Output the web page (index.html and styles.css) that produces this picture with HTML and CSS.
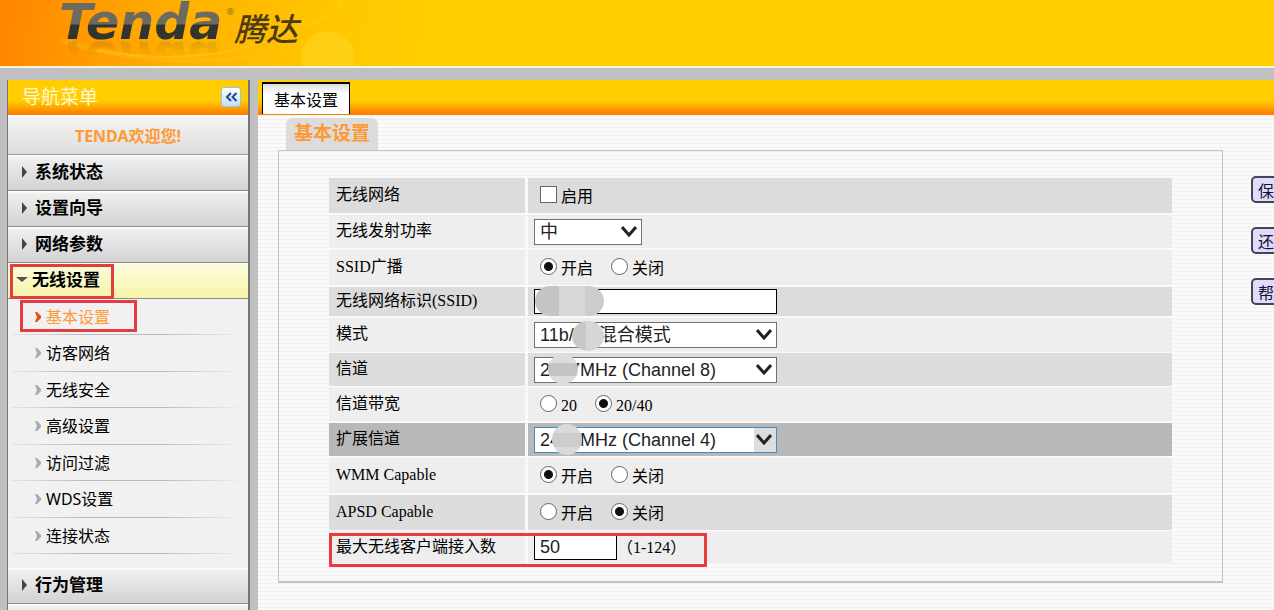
FILE: index.html
```html
<!DOCTYPE html>
<html lang="zh-CN">
<head>
<meta charset="utf-8">
<title>Tenda 腾达 - 无线设置</title>
<link rel="stylesheet" href="styles.css">
</head>
<body>
<header class="banner">
  <svg class="banner-art" viewBox="0 0 430 66" aria-hidden="true">
    <circle cx="328" cy="58" r="27" fill="#ffd21a" opacity=".7"/>
    <path d="M95 50Q190 68 270 40T340 0" fill="none" stroke="#ffcf30" stroke-width="2" opacity=".4"/>
    <path d="M60 40Q170 75 300 50" fill="none" stroke="#ffc21a" stroke-width="5" opacity=".3"/>
  </svg>
  <div class="logo"><span class="logo-latin">Tenda</span><sup class="logo-mark">®</sup><span class="logo-cjk">腾达</span></div>
</header>

<div class="layout">
  <nav class="sidebar">
    <div class="sidebar-head">
      <span>导航菜单</span>
      <button class="collapse" type="button" aria-label="收起">
        <svg width="13" height="10" viewBox="0 0 13 10"><path d="M6 1L2 5l4 4M11.500 1l-4 4 4 4" fill="none" stroke="#1c4a94" stroke-width="2"/></svg>
      </button>
    </div>
    <div class="welcome">TENDA欢迎您!</div>
    <a class="nav-item" href="#"><span class="arrow"></span>系统状态</a>
    <a class="nav-item" href="#"><span class="arrow"></span>设置向导</a>
    <a class="nav-item" href="#"><span class="arrow"></span>网络参数</a>
    <a class="nav-item open" href="#"><span class="arrow down"></span>无线设置<span class="mark mark-group"></span></a>
    <ul class="subnav">
      <li><a class="current" href="#"><svg class="chev" viewBox="0 0 6 12"><path d="M0 1h2l5 5-5 5H0l2-5z"/></svg>基本设置<span class="mark mark-page"></span></a></li>
      <li><a href="#"><svg class="chev" viewBox="0 0 6 12"><path d="M0 1h2l5 5-5 5H0l2-5z"/></svg>访客网络</a></li>
      <li><a href="#"><svg class="chev" viewBox="0 0 6 12"><path d="M0 1h2l5 5-5 5H0l2-5z"/></svg>无线安全</a></li>
      <li><a href="#"><svg class="chev" viewBox="0 0 6 12"><path d="M0 1h2l5 5-5 5H0l2-5z"/></svg>高级设置</a></li>
      <li><a href="#"><svg class="chev" viewBox="0 0 6 12"><path d="M0 1h2l5 5-5 5H0l2-5z"/></svg>访问过滤</a></li>
      <li><a href="#"><svg class="chev" viewBox="0 0 6 12"><path d="M0 1h2l5 5-5 5H0l2-5z"/></svg>WDS设置</a></li>
      <li><a href="#"><svg class="chev" viewBox="0 0 6 12"><path d="M0 1h2l5 5-5 5H0l2-5z"/></svg>连接状态</a></li>
    </ul>
    <a class="nav-item" href="#"><span class="arrow"></span>行为管理</a>
    <a class="nav-item" href="#"><span class="arrow"></span></a>
  </nav>

  <main class="content">
    <div class="tabs"><a class="tab" href="#">基本设置</a></div>
    <div class="body">
      <form class="form">
        <h1 class="title">基本设置</h1>
        <div class="panel">
          <table class="settings">
            <tr class="tall dark">
              <th>无线网络</th>
              <td><div class="choices"><label><input type="checkbox">启用</label></div></td>
            </tr>
            <tr class="mid">
              <th><label for="power">无线发射功率</label></th>
              <td><div class="select narrow"><select id="power"><option>中</option></select><svg viewBox="0 0 16 11"><path d="M1 1l7 8 7-8"/></svg></div></td>
            </tr>
            <tr class="tall">
              <th>SSID广播</th>
              <td><div class="choices"><label><input type="radio" name="cast" checked>开启</label><label><input type="radio" name="cast">关闭</label></div></td>
            </tr>
            <tr class="short dark">
              <th><label for="ssid">无线网络标识(SSID)</label></th>
              <td><div class="field"><input id="ssid" class="text" type="text"><span class="blur blur-ssid"></span></div></td>
            </tr>
            <tr class="mid">
              <th><label for="mode">模式</label></th>
              <td><div class="select"><select id="mode"><option>11b/g/n混合模式</option></select><svg viewBox="0 0 16 11"><path d="M1 1l7 8 7-8"/></svg><span class="blur blur-mode"></span></div></td>
            </tr>
            <tr class="mid dark">
              <th><label for="channel">信道</label></th>
              <td><div class="select"><select id="channel"><option>2447MHz (Channel 8)</option></select><svg viewBox="0 0 16 11"><path d="M1 1l7 8 7-8"/></svg><span class="blur blur-channel"></span></div></td>
            </tr>
            <tr class="mid">
              <th>信道带宽</th>
              <td><div class="choices"><label><input type="radio" name="width">20</label><label><input type="radio" name="width" checked>20/40</label></div></td>
            </tr>
            <tr class="mid active">
              <th><label for="ext">扩展信道</label></th>
              <td><div class="select focused"><select id="ext"><option>2427MHz (Channel 4)</option></select><svg viewBox="0 0 16 11"><path d="M1 1l7 8 7-8"/></svg><span class="blur blur-ext"></span></div></td>
            </tr>
            <tr class="tall">
              <th>WMM Capable</th>
              <td><div class="choices"><label><input type="radio" name="wmm" checked>开启</label><label><input type="radio" name="wmm">关闭</label></div></td>
            </tr>
            <tr class="tall dark">
              <th>APSD Capable</th>
              <td><div class="choices"><label><input type="radio" name="apsd">开启</label><label><input type="radio" name="apsd" checked>关闭</label></div></td>
            </tr>
            <tr class="last">
              <th><div class="marked"><label for="max">最大无线客户端接入数</label><span class="mark mark-max"></span></div></th>
              <td><div class="limit"><input id="max" class="text small" type="text" value="50"><span>（1-124）</span></div></td>
            </tr>
          </table>
        </div>
      </form>
      <div class="actions">
        <button type="button">保存</button>
        <button type="button">还原</button>
        <button type="button">帮助</button>
      </div>
    </div>
  </main>
</div>
</body>
</html>
```
FILE: styles.css
```css
* { box-sizing: border-box; }
body {
  margin: 0;
  height: 100vh;
  overflow: hidden;
  display: flex;
  flex-direction: column;
  background: #c0c0c0;
  color: #000;
  font: 16px/20px "Noto Sans", "Noto Sans CJK SC", sans-serif;
}
a { color: inherit; text-decoration: none; }

.banner {
  position: relative;
  flex: none;
  height: 68px;
  overflow: hidden;
  border-bottom: 2px solid #f8f4e0;
  background: linear-gradient(100deg, #ff8400 0, #ff9300 60px, #ffb200 190px, #ffc800 340px, #ffcd00 430px);
}
.banner-art { position: absolute; left: 0; top: 0; width: 430px; height: 66px; }
.logo { position: relative; display: flex; align-items: flex-start; padding-left: 59px; }
.logo-latin {
  padding-right: 4px;
  font: italic bold 49px/46px "DejaVu Sans", sans-serif;
  background: linear-gradient(#6d6a62 0 24px, #33332f 25px);
  background-clip: text;
  -webkit-background-clip: text;
  color: transparent;
  -webkit-box-reflect: below -11px linear-gradient(transparent 55%, rgba(0, 0, 0, .2));
}
.logo-mark { font-size: 9px; line-height: 24px; color: #8a6a20; }
.logo-cjk { font: italic 500 32px/54px "Noto Sans CJK SC", sans-serif; color: #4a3a10; }

.layout { flex: 1; display: flex; gap: 8px; padding: 12px 0 0 7px; min-height: 0; }

.sidebar {
  flex: none;
  width: 243px;
  border: solid #777;
  border-width: 0 2px 0 1px;
  background: #f1f1f1;
  overflow: hidden;
}
.sidebar-head {
  display: flex;
  align-items: center;
  justify-content: space-between;
  height: 35px;
  padding: 0 7px 2px 14px;
  background: linear-gradient(#ffcd00 60%, #ff8000 95%);
  color: #fff8d8;
  font-size: 19px;
}
.collapse {
  display: grid;
  place-items: center;
  width: 20px;
  height: 20px;
  padding: 0;
  border: 1px solid #9fc0e8;
  border-radius: 3px;
  background: linear-gradient(#fff, #c4dcf6);
}
.welcome {
  height: 40px;
  border-top: 2px solid #fff;
  border-bottom: 1px solid #999;
  background: linear-gradient(#f4f4f4, #dcdcdc);
  color: #ff9933;
  font-weight: bold;
  line-height: 38px;
  text-align: center;
}
.nav-item {
  position: relative;
  display: flex;
  align-items: center;
  gap: 8px;
  height: 36px;
  padding: 0 0 2px 14px;
  border-bottom: 1px solid #8c8c8c;
  background: linear-gradient(#fff 0 1px, #f0f0f0 2px, #d2d2d2);
  font-size: 17px;
  font-weight: bold;
}
.arrow { border: solid transparent; border-width: 6px 0 6px 5px; border-left-color: #444; }
.arrow.down { border-width: 5px 6px 0; border-color: #555 transparent transparent; }
.open { gap: 4px; padding-left: 8px; background: linear-gradient(#fdfde0, #f6f4a8); }

.subnav { list-style: none; margin: 0; padding: 0 0 14px; }
.subnav li {
  height: 36px;
  background: linear-gradient(90deg, #e4e4e4, #bbb 30% 65%, #f1f1f1) bottom / 232px 1px no-repeat;
}
.subnav li:nth-child(even) { height: 37px; }
.subnav a { position: relative; display: flex; align-items: center; gap: 5px; height: 35px; padding-left: 27px; }
.chev { width: 6px; height: 12px; fill: #aaa; }
.current { color: #ff9933; }
.current .chev { fill: #f04a18; }

.mark { position: absolute; border: 3px solid #e43d40; pointer-events: none; }
.mark-group { left: 2px; top: 1px; width: 104px; height: 35px; }
.mark-page { left: 12px; top: 1px; width: 117px; height: 32px; }
.mark-max { left: -7px; top: -4px; width: 378px; height: 34px; }

.content {
  flex: 1;
  min-width: 0;
  overflow: hidden;
  background: repeating-linear-gradient(#fafafa 0 3px, #f1f1f1 3px 4px);
}
.tabs { height: 35px; padding: 2px 4px 1px; background: linear-gradient(#ffcd00 60%, #ff8000 95%); }
.tab {
  display: inline-block;
  height: 32px;
  padding: 6px 11px;
  border: solid #000;
  border-width: 2px 1px 0;
  background: linear-gradient(#ddd, #fff 10px);
}
.body { display: flex; gap: 28px; padding: 3px 0 0 20px; }
.form { flex: 1; min-width: 0; }
.title {
  width: max-content;
  height: 32px;
  margin: 0 8px;
  padding: 0 8px;
  border-radius: 6px 6px 0 0;
  background: #dcdcdc;
  color: #ff9933;
  font-size: 19px;
  line-height: 30px;
}
.panel { padding: 25px 47px 16px; border: 1px solid #c4c4c4; border-bottom-width: 2px; }
.settings {
  width: 100%;
  border-spacing: 3px 2px;
  table-layout: fixed;
  font: 16px/20px "Liberation Serif", "Noto Sans CJK SC", serif;
}
.settings th { width: 196px; padding: 0 7px 2px; text-align: left; font-weight: normal; }
.settings td { padding: 0 6px; }
.settings th, .settings td { background: #eee; }
.dark th, .dark td { background: #dcdcdc; }
.settings .active th, .settings .active td { background: #b8b8b8; }
.settings .dark th, .settings .dark td { background: #dcdcdc; }
.tall { height: 35px; }
.mid { height: 33px; }
.short { height: 29px; }
.last { height: 31px; }

.choices { display: flex; gap: 18px; padding-left: 6px; }
.choices label { display: flex; align-items: flex-start; gap: 4px; padding-top: 2px; line-height: 22px; }
.choices input {
  appearance: none;
  width: 17px;
  height: 17px;
  margin: 0;
  border: 1px solid #666;
  background: #fff;
}
.choices input[type="radio"] { border-radius: 50%; }
.choices input[type="radio"]:checked { background: radial-gradient(circle, #111 0 4px, #fff 5px); }

.select, .field { position: relative; width: 243px; }
.select.narrow { width: 108px; }
.select select {
  display: block;
  appearance: none;
  width: 100%;
  height: 26px;
  padding: 0 5px;
  border: 1px solid #707070;
  border-radius: 0;
  background: #fff;
  color: #222;
  font: 18px/22px "Liberation Sans", "Noto Sans CJK SC", sans-serif;
}
.select svg { position: absolute; right: 5px; top: 7px; width: 16px; height: 11px; fill: none; stroke: #222; stroke-width: 3; pointer-events: none; }
.select.focused select { border-color: #3c8fc0; background: linear-gradient(90deg, #fff 219px, #ddd 219px); }
.text {
  display: block;
  width: 100%;
  height: 25px;
  padding: 0 5px;
  border: 1px solid #000;
  background: #fff;
  color: #222;
  font: 18px/22px "Liberation Sans", sans-serif;
}
.small { width: 83px; }
.limit { display: flex; align-items: center; }
.marked { position: relative; }

.blur { position: absolute; pointer-events: none; border-radius: 50%; background: #ddd; }
.blur-ssid { left: 1px; top: -3px; width: 69px; height: 30px; border-radius: 15px; background: linear-gradient(90deg, #c4c4c4 35%, #d8d8d8 35% 72%, #ccc 72%); }
.blur-mode { left: 38px; top: -1px; width: 32px; height: 30px; background: linear-gradient(90deg, #c8c8c8 45%, #d6d6d6 45%); }
.blur-channel { left: 14px; top: -3px; width: 30px; height: 30px; background: linear-gradient(#ddd 30%, #c4c4c4 30% 75%, #ddd 75%); }
.blur-ext { left: 18px; top: -3px; width: 30px; height: 31px; background: linear-gradient(#dadada 30%, #ccc 30% 75%, #dadada 75%); }

.actions { flex: none; display: flex; flex-direction: column; gap: 24px; width: 23px; padding-top: 58px; }
.actions button {
  width: 56px;
  height: 27px;
  padding: 0 5px;
  border: 2px solid #445;
  border-radius: 5px;
  background: #dedcfa;
  color: #113;
  font: 16px/20px "Noto Sans CJK SC", sans-serif;
  text-align: left;
}
```
